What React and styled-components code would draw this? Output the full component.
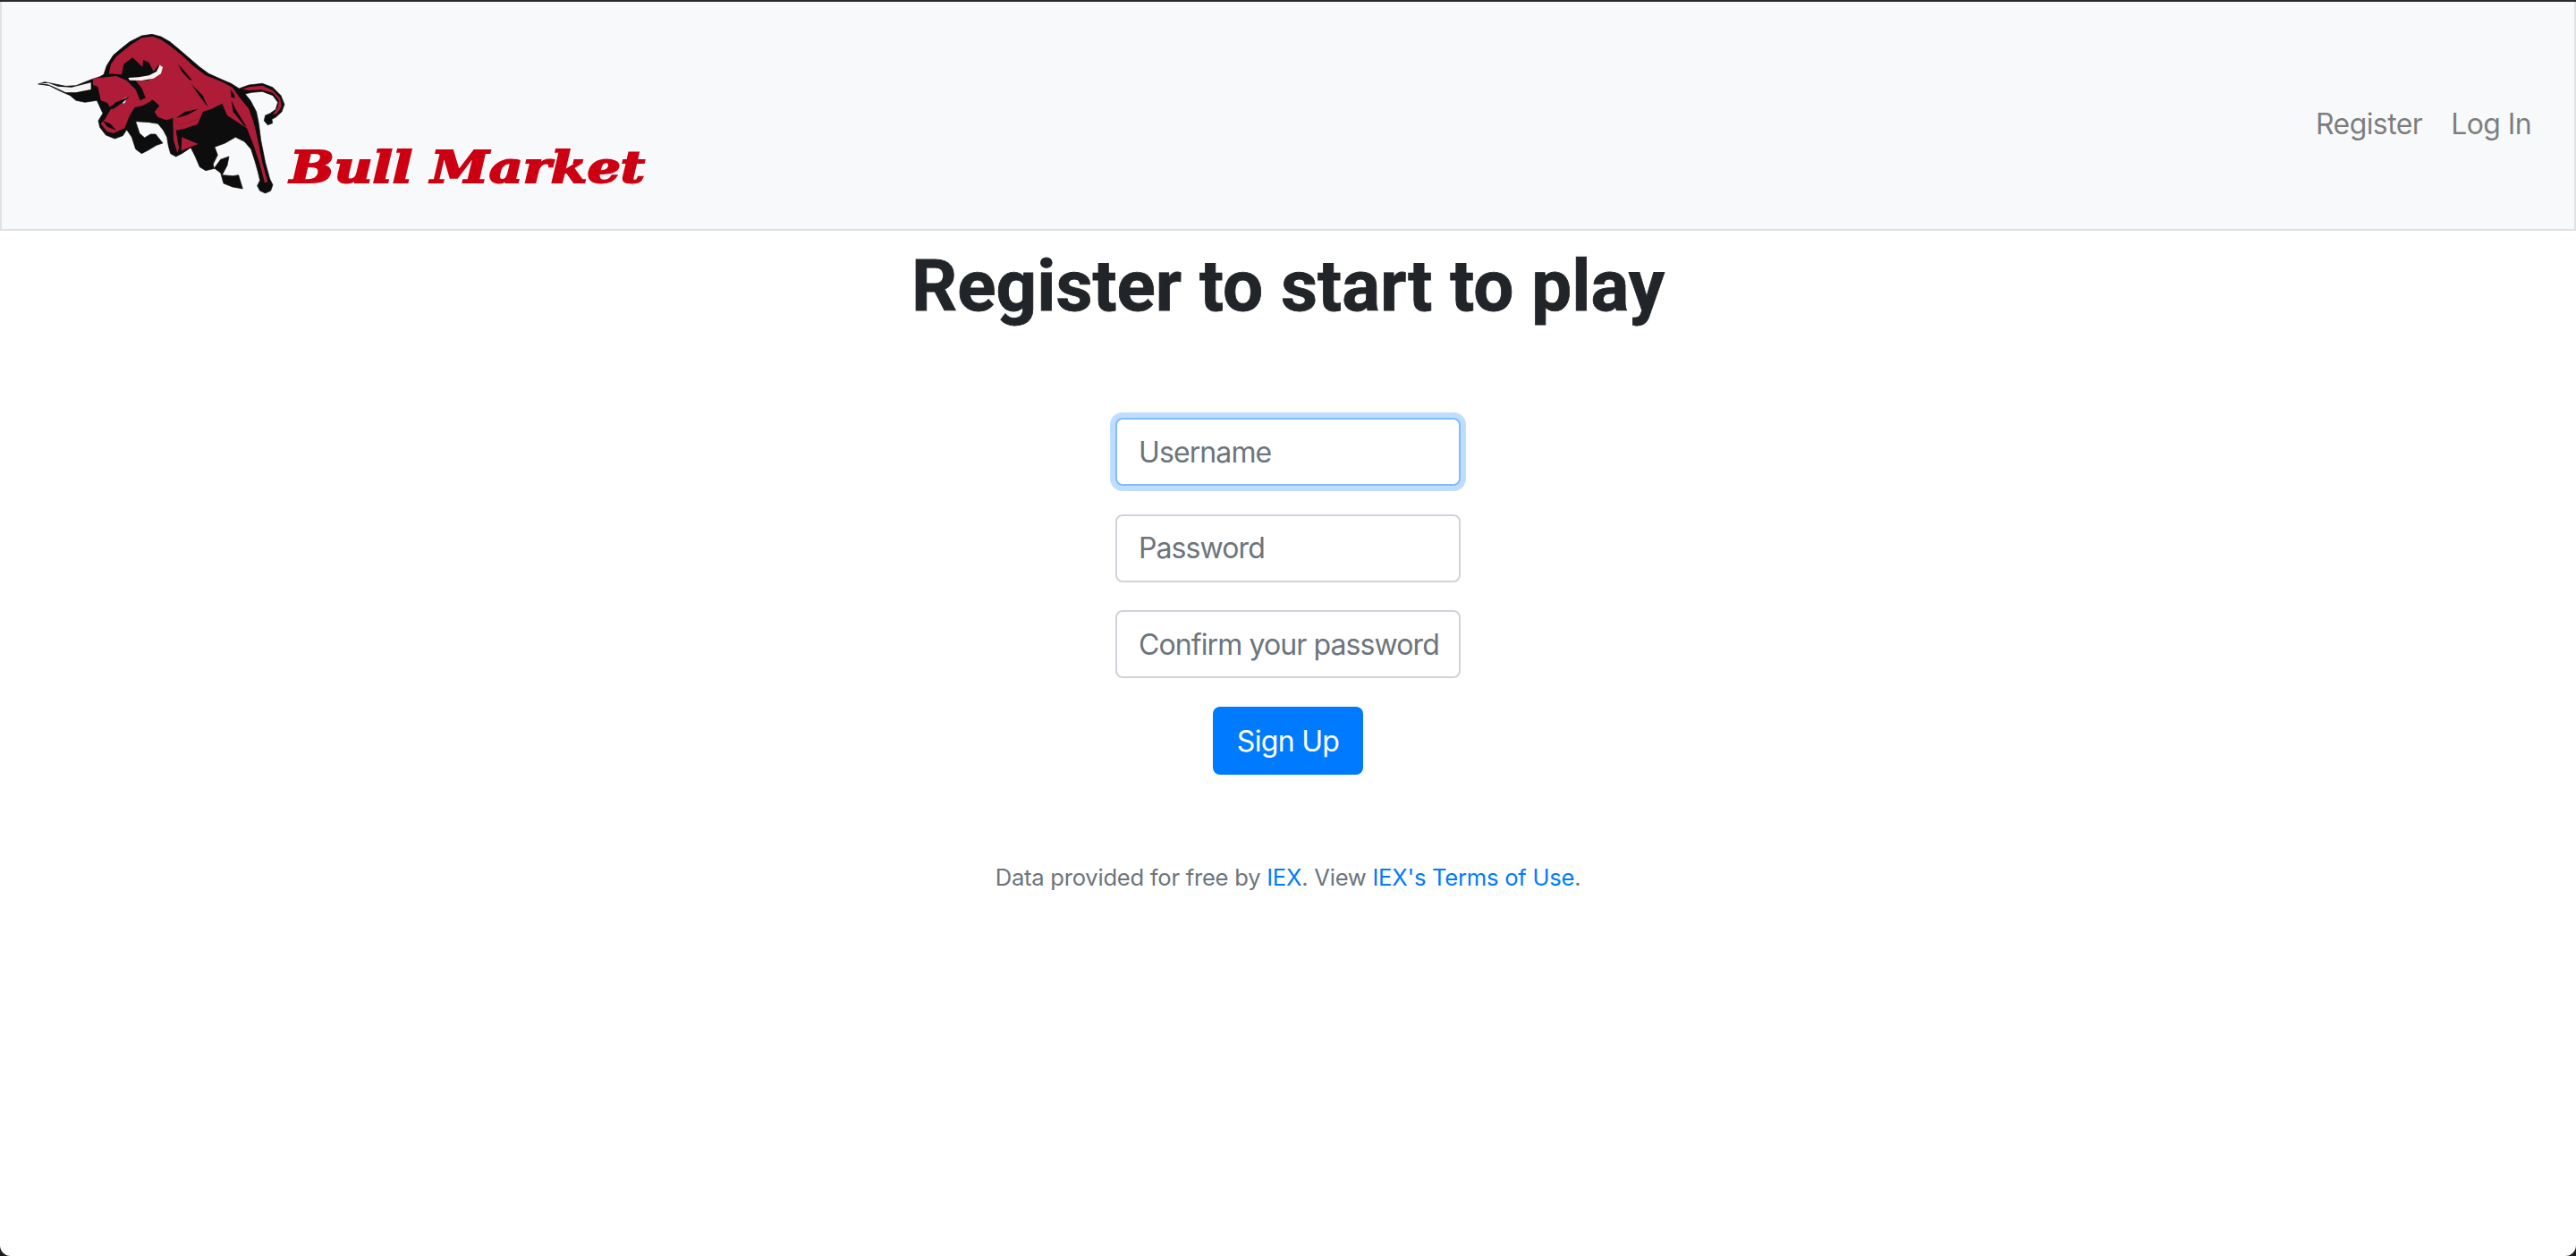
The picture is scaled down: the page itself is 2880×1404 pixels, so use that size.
import React from 'react';
import { styled, createGlobalStyle } from 'styled-components';

const GlobalStyle = createGlobalStyle`
    html, body {
        margin: 0;
        padding: 0;
        height: 100%;
        background: #1c1c1e;
    }
    #root {
        height: 100%;
    }
`;

const Page = styled.div`
    height: 1402px;
    border-top: 2px solid #2a2b2d;
    background: white;
    border-radius: 0 0 12px 12px;
    overflow: hidden;
    font-family: 'Inter', 'Liberation Sans', sans-serif;
`;

const NavBar = styled.nav`
    height: 256px;
    box-sizing: border-box;
    display: flex;
    align-items: center;
    justify-content: space-between;
    background: #f8f9fa;
    border: 2px solid #dee2e6;
    border-top: none;
    padding: 0 48px 0 40px;
`;

const Logo = styled.svg`
    display: block;
    width: 700px;
    height: 200px;
    filter: blur(0.5px);
`;

const NavLinks = styled.div`
    display: flex;
    gap: 32px;
    padding-top: 20px;
`;

const NavLink = styled.a`
    font-size: 32px;
    line-height: 48px;
    color: rgba(0, 0, 0, 0.5);
    text-decoration: none;
    letter-spacing: -0.6px;
`;

const Main = styled.main`
    display: flex;
    flex-direction: column;
    align-items: center;
`;

const Title = styled.h1`
    font-family: 'Roboto', sans-serif;
    font-weight: 700;
    font-size: 80px;
    line-height: 96px;
    color: #212529;
    margin: 14px 0 0;
    -webkit-text-stroke: 0.8px #212529;
`;

const Form = styled.form`
    display: flex;
    flex-direction: column;
    align-items: center;
    gap: 31.7px;
    margin-top: 99px;
`;

const Input = styled.input`
    width: 386px;
    height: 76px;
    box-sizing: border-box;
    padding: 0 0 0 24px;
    font-family: inherit;
    font-size: 32px;
    letter-spacing: -0.9px;
    color: #495057;
    background: white;
    border: 2px solid ${props => (props.$focused ? '#80bdff' : '#ced4da')};
    border-radius: 8px;
    box-shadow: ${props => (props.$focused ? '0 0 0 6px #bfdeff' : 'none')};
    outline: none;

    &::placeholder {
        color: #6c757d;
        opacity: 1;
    }
`;

const SubmitButton = styled.button`
    width: 168px;
    height: 76px;
    font-family: inherit;
    font-size: 32px;
    letter-spacing: -0.7px;
    color: white;
    background: #007bff;
    border: none;
    border-radius: 8px;
`;

const Attribution = styled.p`
    font-size: 25.6px;
    line-height: 38px;
    color: #6c757d;
    letter-spacing: -0.25px;
    margin: 96px 0 0;
`;

const TextLink = styled.a`
    color: #007bff;
    text-decoration: none;
`;

const BullLogo = () => (
    <Logo viewBox="0 0 700 200">
        <g transform="translate(-12 -4) scale(0.3333)">
            <path
                fill="#0d0d0d"
                stroke="#0d0d0d"
                strokeWidth="2"
                strokeLinejoin="round"
                d="M38 207 L60 200 L95 207 L130 214 L165 212 L215 192 L245 182 L258 175 L268 145 L290 110 L320 85 L345 65 L385 45 L420 40 L450 48 L480 65 L510 90 L545 120 L580 150 L610 172 L650 190 L685 205 L712 222 L745 210 L790 205 L825 218 L852 245 L864 275 L855 300 L835 318 L822 325 L824 338 L808 344 L796 330 L800 312 L815 306 L835 292 L842 268 L825 245 L790 232 L755 235 L732 240 L750 262 L770 300 L778 340 L785 395 L800 470 L815 525 L825 545 L818 565 L800 573 L782 565 L773 548 L782 530 L775 500 L765 465 L752 425 L730 400 L700 385 L665 405 L630 418 L640 445 L625 475 L628 490 L650 460 L678 450 L672 480 L655 512 L692 515 L710 512 L724 558 L690 552 L660 540 L650 505 L630 490 L600 497 L580 485 L565 450 L550 420 L520 440 L500 450 L482 440 L475 415 L470 385 L458 362 L440 340 L410 335 L365 332 L378 372 L395 387 L415 375 L432 375 L456 405 L435 412 L405 430 L385 440 L365 425 L352 385 L335 360 L322 380 L295 390 L265 378 L245 352 L240 330 L255 305 L235 262 L195 268 L165 262 L145 245 L115 232 L75 212 Z"
            />
            <path
                fill="#ae1c37"
                d="M282 140 L300 115 L345 78 L385 52 L422 47 L450 58 L480 78 L520 110 L560 148 L600 178 L650 197 L690 218 L712 250 L745 290 L762 340 L775 395 L790 470 L808 535 L798 538 L780 470 L760 410 L738 355 L672 312 L655 272 L620 290 L590 300 L582 322 L545 335 L510 345 L490 320 L468 328 L440 318 L428 300 L445 280 L425 262 L398 252 L385 220 L365 196 L405 195 L440 178 L452 152 L440 145 L425 165 L410 135 L390 125 L388 150 L355 118 L325 140 L318 175 L275 172 Z"
            />
            <path
                fill="#ae1c37"
                d="M222 188 L300 180 L335 195 L365 225 L380 262 L405 250 L432 245 L415 265 L388 280 L362 285 L345 312 L328 355 L290 372 L268 365 L248 340 L262 325 L282 290 L270 270 L248 262 L238 215 L222 210 Z"
            />
            <path
                fill="#ae1c37"
                d="M490 320 L510 345 L545 335 L582 322 L572 342 L525 358 L500 362 L510 420 L505 438 L492 395 Z"
            />
            <path fill="#ae1c37" d="M520 385 L575 408 L530 425 L518 432 Z" />
            <path
                fill="#ae1c37"
                d="M722 224 L745 217 L790 212 L825 228 L850 255 L854 283 L838 306 L825 310 L842 285 L846 262 L825 236 L785 226 L745 228 Z"
            />
            <path
                fill="#f4f4f4"
                d="M340 186 L375 184 L410 178 L435 165 L446 143 L456 150 L450 172 L425 188 L385 195 L345 194 Z"
            />
            <path
                fill="#f4f4f4"
                d="M42 206 L72 203 L105 215 L150 218 L215 202 L215 225 L165 235 L130 235 L95 218 L70 208 Z"
            />
            <path fill="#d8d8d8" d="M316 262 L335 250 L330 270 L322 272 Z" />
            <path fill="#0d0d0d" d="M508 140 L535 170 L555 195 L545 192 L520 165 Z" />
            <path fill="#0d0d0d" d="M552 208 L590 245 L608 285 L585 255 Z" />
            <path fill="#0d0d0d" d="M683 225 L695 240 L698 255 L685 250 Z" />
            <path fill="#0d0d0d" d="M686 262 L700 290 L738 352 L728 345 L692 300 Z" />
            <path fill="#0d0d0d" d="M270 290 L300 268 L345 248 L320 270 L290 290 Z" />
            <path fill="#0d0d0d" d="M500 322 L530 300 L575 290 L540 310 Z" />
            <path fill="#0d0d0d" d="M255 330 L280 340 L300 362 L270 350 Z" />
        </g>
        <text
            x="282"
            y="175"
            textLength="397"
            lengthAdjust="spacingAndGlyphs"
            fill="#cc0012"
            stroke="#cc0012"
            strokeWidth="2"
            fontFamily="'DejaVu Serif', serif"
            fontWeight="700"
            fontStyle="italic"
            fontSize="49"
        >
            Bull Market
        </text>
    </Logo>
);

const App = () => {
    return (
        <Page>
            <GlobalStyle />
            <NavBar>
                <BullLogo />
                <NavLinks>
                    <NavLink href="#">Register</NavLink>
                    <NavLink href="#">Log In</NavLink>
                </NavLinks>
            </NavBar>
            <Main>
                <Title>Register to start to play</Title>
                <Form>
                    <Input $focused placeholder="Username" />
                    <Input type="password" placeholder="Password" />
                    <Input type="password" placeholder="Confirm your password" />
                    <SubmitButton type="button">Sign Up</SubmitButton>
                </Form>
                <Attribution>
                    Data provided for free by <TextLink href="#">IEX</TextLink>. View{' '}
                    <TextLink href="#">IEX's Terms of Use</TextLink>.
                </Attribution>
            </Main>
        </Page>
    );
};

export default App;
